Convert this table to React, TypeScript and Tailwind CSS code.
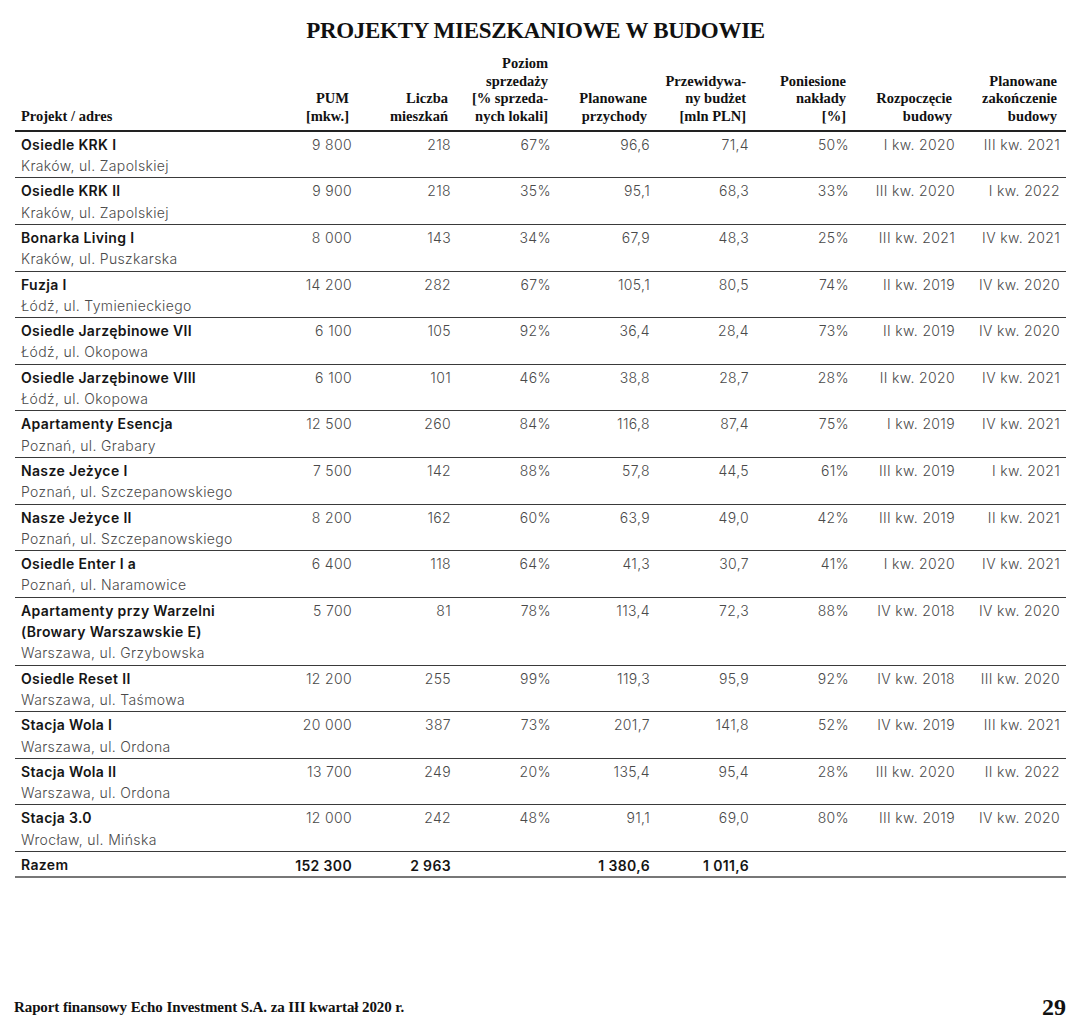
import React from "react";

type Row = {
    name: string[];
    addr: string;
    pum: string;
    units: string;
    sold: string;
    revenue: string;
    budget: string;
    spent: string;
    start: string;
    end: string;
};

const rows: Row[] = [
    { name: ["Osiedle KRK I"], addr: "Kraków, ul. Zapolskiej", pum: "9 800", units: "218", sold: "67%", revenue: "96,6", budget: "71,4", spent: "50%", start: "I kw. 2020", end: "III kw. 2021" },
    { name: ["Osiedle KRK II"], addr: "Kraków, ul. Zapolskiej", pum: "9 900", units: "218", sold: "35%", revenue: "95,1", budget: "68,3", spent: "33%", start: "III kw. 2020", end: "I kw. 2022" },
    { name: ["Bonarka Living I"], addr: "Kraków, ul. Puszkarska", pum: "8 000", units: "143", sold: "34%", revenue: "67,9", budget: "48,3", spent: "25%", start: "III kw. 2021", end: "IV kw. 2021" },
    { name: ["Fuzja I"], addr: "Łódź, ul. Tymienieckiego", pum: "14 200", units: "282", sold: "67%", revenue: "105,1", budget: "80,5", spent: "74%", start: "II kw. 2019", end: "IV kw. 2020" },
    { name: ["Osiedle Jarzębinowe VII"], addr: "Łódź, ul. Okopowa", pum: "6 100", units: "105", sold: "92%", revenue: "36,4", budget: "28,4", spent: "73%", start: "II kw. 2019", end: "IV kw. 2020" },
    { name: ["Osiedle Jarzębinowe VIII"], addr: "Łódź, ul. Okopowa", pum: "6 100", units: "101", sold: "46%", revenue: "38,8", budget: "28,7", spent: "28%", start: "II kw. 2020", end: "IV kw. 2021" },
    { name: ["Apartamenty Esencja"], addr: "Poznań, ul. Grabary", pum: "12 500", units: "260", sold: "84%", revenue: "116,8", budget: "87,4", spent: "75%", start: "I kw. 2019", end: "IV kw. 2021" },
    { name: ["Nasze Jeżyce I"], addr: "Poznań, ul. Szczepanowskiego", pum: "7 500", units: "142", sold: "88%", revenue: "57,8", budget: "44,5", spent: "61%", start: "III kw. 2019", end: "I kw. 2021" },
    { name: ["Nasze Jeżyce II"], addr: "Poznań, ul. Szczepanowskiego", pum: "8 200", units: "162", sold: "60%", revenue: "63,9", budget: "49,0", spent: "42%", start: "III kw. 2019", end: "II kw. 2021" },
    { name: ["Osiedle Enter I a"], addr: "Poznań, ul. Naramowice", pum: "6 400", units: "118", sold: "64%", revenue: "41,3", budget: "30,7", spent: "41%", start: "I kw. 2020", end: "IV kw. 2021" },
    { name: ["Apartamenty przy Warzelni", "(Browary Warszawskie E)"], addr: "Warszawa, ul. Grzybowska", pum: "5 700", units: "81", sold: "78%", revenue: "113,4", budget: "72,3", spent: "88%", start: "IV kw. 2018", end: "IV kw. 2020" },
    { name: ["Osiedle Reset II"], addr: "Warszawa, ul. Taśmowa", pum: "12 200", units: "255", sold: "99%", revenue: "119,3", budget: "95,9", spent: "92%", start: "IV kw. 2018", end: "III kw. 2020" },
    { name: ["Stacja Wola I"], addr: "Warszawa, ul. Ordona", pum: "20 000", units: "387", sold: "73%", revenue: "201,7", budget: "141,8", spent: "52%", start: "IV kw. 2019", end: "III kw. 2021" },
    { name: ["Stacja Wola II"], addr: "Warszawa, ul. Ordona", pum: "13 700", units: "249", sold: "20%", revenue: "135,4", budget: "95,4", spent: "28%", start: "III kw. 2020", end: "II kw. 2022" },
    { name: ["Stacja 3.0"], addr: "Wrocław, ul. Mińska", pum: "12 000", units: "242", sold: "48%", revenue: "91,1", budget: "69,0", spent: "80%", start: "III kw. 2019", end: "IV kw. 2020" },
];

const headers: string[][] = [
    ["PUM", "[mkw.]"],
    ["Liczba", "mieszkań"],
    ["Poziom", "sprzedaży", "[% sprzeda-", "nych lokali]"],
    ["Planowane", "przychody"],
    ["Przewidywa-", "ny budżet", "[mln PLN]"],
    ["Poniesione", "nakłady", "[%]"],
    ["Rozpoczęcie", "budowy"],
    ["Planowane", "zakończenie", "budowy"],
];

const serif = "font-['Liberation_Serif',serif]";

export default function App() {
    return (
        <main className="min-h-[1029px] bg-white flex flex-col pl-[15px] pr-[20px] font-['Inter',sans-serif]">
            <h1 className={`${serif} text-center font-bold text-[23px] leading-[28px] pt-[17px] pr-[10px] text-[#111] tracking-[-0.3px]`}>
                PROJEKTY MIESZKANIOWE W BUDOWIE
            </h1>

            <table className="mt-[10px] w-[1051px] table-fixed border-collapse">
                <colgroup>
                    <col className="w-[243px]" />
                    <col className="w-[100px]" />
                    <col className="w-[99px]" />
                    <col className="w-[100px]" />
                    <col className="w-[99px]" />
                    <col className="w-[99px]" />
                    <col className="w-[100px]" />
                    <col className="w-[106px]" />
                    <col className="w-[105px]" />
                </colgroup>
                <thead>
                    <tr className="border-b-2 border-[#222]">
                        <th className={`${serif} align-bottom text-left font-bold text-[14.5px] leading-[17.7px] pl-[6px] pb-[4px] text-[#111]`}>
                            Projekt / adres
                        </th>
                        {headers.map((h, i) => (
                            <th key={i} className={`${serif} align-bottom text-right font-bold text-[14.5px] leading-[17.7px] pr-[9px] pb-[4px] text-[#111]`}>
                                {h.map((line, j) => (
                                    <div key={j} className="whitespace-nowrap">{line}</div>
                                ))}
                            </th>
                        ))}
                    </tr>
                </thead>
                <tbody>
                    {rows.map((r, i) => (
                        <tr key={i} className="border-b border-[#3a3a3a] align-top text-[14px] leading-[21.3px] tracking-[0.35px]">
                            <td className="pl-[6px] pt-[2px] pb-[1px]">
                                {r.name.map((n, j) => (
                                    <div key={j} className="font-semibold text-[#151515] whitespace-nowrap">{n}</div>
                                ))}
                                <div className="font-light text-[#4a4a4a] whitespace-nowrap">{r.addr}</div>
                            </td>
                            {[r.pum, r.units, r.sold, r.revenue, r.budget, r.spent, r.start, r.end].map((v, j) => (
                                <td key={j} className="text-right pr-[6px] pt-[2px] font-light text-[#4a4a4a] whitespace-nowrap">
                                    {v}
                                </td>
                            ))}
                        </tr>
                    ))}
                    <tr className="border-b-2 border-[#777] text-[14px] leading-[21.3px] tracking-[0.35px] font-semibold text-[#151515]">
                        <td className="pl-[6px] pt-[2px] pb-[1px]">Razem</td>
                        <td className="text-right pr-[6px] pt-[2px]">152 300</td>
                        <td className="text-right pr-[6px] pt-[2px]">2 963</td>
                        <td></td>
                        <td className="text-right pr-[6px] pt-[2px]">1 380,6</td>
                        <td className="text-right pr-[6px] pt-[2px]">1 011,6</td>
                        <td></td>
                        <td></td>
                        <td></td>
                    </tr>
                </tbody>
            </table>

            <footer className={`${serif} mt-auto flex items-center justify-between pb-[9px] text-[#111] font-bold`}>
                <span className="text-[15px] leading-[18px] tracking-[-0.1px] -ml-[1px]">
                    Raport finansowy Echo Investment S.A. za III kwartał 2020 r.
                </span>
                <span className="text-[24px] leading-[26px]">29</span>
            </footer>
        </main>
    );
}
